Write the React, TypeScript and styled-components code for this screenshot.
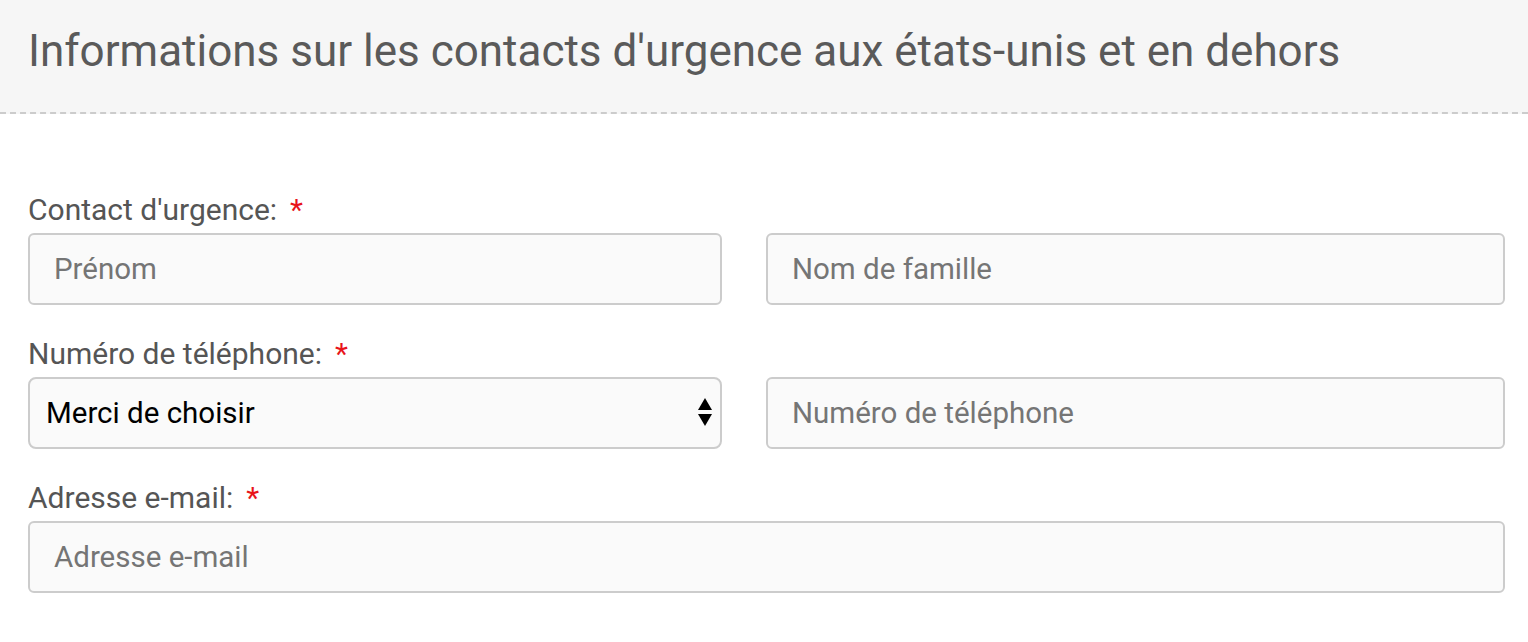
import React from "react";
import styled, { createGlobalStyle } from "styled-components";

const GlobalStyle = createGlobalStyle`
  html, body {
    margin: 0;
    padding: 0;
    background: #fff;
  }
  body {
    font-family: Roboto, "Noto Sans", "Liberation Sans", sans-serif;
    color: #555;
  }
  * {
    box-sizing: border-box;
  }
`;

const Header = styled.div`
  height: 114px;
  background-color: #f6f6f6;
  border-bottom: 2px dashed #cccccc;
  padding: 0 28px;
  display: flex;
  align-items: center;
`;

const Title = styled.h2`
  margin: 0 0 10px 0;
  font-size: 44px;
  font-weight: 400;
  color: #5a5a5a;
`;

const Form = styled.form`
  padding: 76px 23px 40px 28px;
  display: flex;
  flex-direction: column;
  gap: 29px;
`;

const Field = styled.div`
  display: flex;
  flex-direction: column;
  gap: 3px;
`;

const Label = styled.label`
  font-size: 30px;
  line-height: 40px;
  color: #555;
`;

const Required = styled.span`
  color: #e8141a;
  margin-left: 13px;
`;

const Row = styled.div`
  display: grid;
  grid-template-columns: 694px 1fr;
  gap: 44px;
`;

const Input = styled.input`
  width: 100%;
  height: 72px;
  padding: 0 24px;
  font-family: inherit;
  font-size: 29.5px;
  color: #333;
  background-color: #fafafa;
  border: 2px solid #cccccc;
  border-radius: 6px;
  outline: none;

  &::placeholder {
    color: #757575;
  }
`;

const SelectWrap = styled.div`
  position: relative;
`;

const Select = styled.select`
  width: 100%;
  height: 72px;
  padding: 0 40px 0 16px;
  font-family: inherit;
  font-size: 29.5px;
  color: #000;
  background-color: #fafafa;
  border: 2px solid #cccccc;
  border-radius: 8px;
  appearance: none;
  outline: none;
`;

const Arrows = styled.svg`
  position: absolute;
  right: 9px;
  top: 21px;
  pointer-events: none;
`;

export default function App() {
  return (
    <>
      <GlobalStyle />
      <Header>
        <Title>Informations sur les contacts d'urgence aux états-unis et en dehors</Title>
      </Header>
      <Form>
        <Field>
          <Label>
            Contact d'urgence:<Required>*</Required>
          </Label>
          <Row>
            <Input placeholder="Prénom" />
            <Input placeholder="Nom de famille" />
          </Row>
        </Field>
        <Field>
          <Label>
            Numéro de téléphone:<Required>*</Required>
          </Label>
          <Row>
            <SelectWrap>
              <Select defaultValue="">
                <option value="">Merci de choisir</option>
              </Select>
              <Arrows width="16" height="30" viewBox="0 0 16 30">
                <path d="M8 0 L15 12 L1 12 Z" fill="#000" />
                <path d="M1 16 L15 16 L8 28 Z" fill="#000" />
              </Arrows>
            </SelectWrap>
            <Input placeholder="Numéro de téléphone" />
          </Row>
        </Field>
        <Field>
          <Label>
            Adresse e-mail:<Required>*</Required>
          </Label>
          <Input placeholder="Adresse e-mail" />
        </Field>
      </Form>
    </>
  );
}
